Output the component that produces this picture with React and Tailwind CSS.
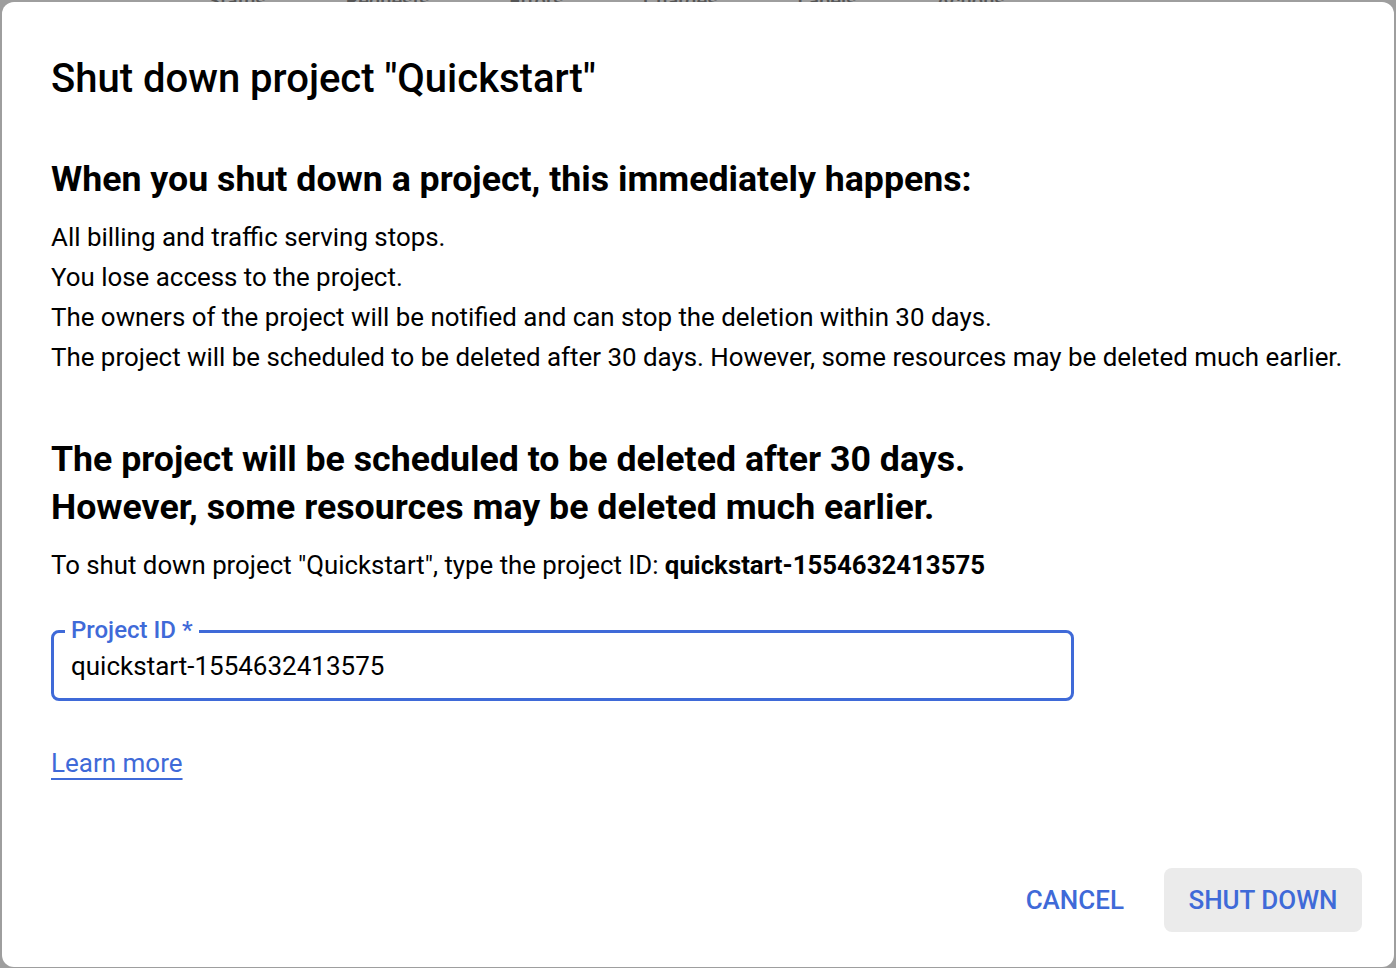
export default function App() {
  const font = { fontFamily: 'Roboto, "Liberation Sans", sans-serif' };
  return (
    <div className="relative w-[1396px] h-[968px] overflow-hidden bg-[#9e9e9e]" style={font}>
      <div className="absolute left-0 top-[-14px] flex gap-[80px] pl-[208px] text-[20px] font-medium text-[#555]">
        <span>Status</span><span>Requests</span><span>Errors</span><span>Charges</span><span>Labels</span><span>Actions</span>
      </div>
      <div className="absolute left-[2px] top-[2px] w-[1392px] h-[965px] bg-white rounded-[12px] flex flex-col pl-[49px] pr-[32px]">
        <h1 className="mt-[53px] text-[40px] leading-[48px] font-medium text-black">Shut down project "Quickstart"</h1>
        <h2 className="mt-[52px] text-[35.7px] leading-[48px] font-bold text-black">When you shut down a project, this immediately happens:</h2>
        <div className="mt-[14px] text-[25.9px] leading-[40px] text-black">
          <p>All billing and traffic serving stops.</p>
          <p>You lose access to the project.</p>
          <p>The owners of the project will be notified and can stop the deletion within 30 days.</p>
          <p>The project will be scheduled to be deleted after 30 days. However, some resources may be deleted much earlier.</p>
        </div>
        <h2 className="mt-[58px] text-[35.7px] leading-[48px] font-bold text-black">The project will be scheduled to be deleted after 30 days.<br />However, some resources may be deleted much earlier.</h2>
        <p className="mt-[16px] text-[25.8px] leading-[36px] text-black">To shut down project "Quickstart", type the project ID: <span className="font-bold">quickstart-1554632413575</span></p>
        <div className="relative mt-[47px] w-[1023px] h-[71px] border-[3px] border-[#3f6ad8] rounded-[8px] flex items-center pl-[17px]">
          <span className="absolute left-[11px] top-[-19px] bg-white px-[6px] text-[24px] leading-[32px] font-medium text-[#3f6ad8]">Project ID *</span>
          <span className="text-[26px] text-black pt-[1px]">quickstart-1554632413575</span>
        </div>
        <div className="mt-[44px]">
          <a className="text-[26px] leading-[36px] text-[#3f6ad8] underline underline-offset-[6px] decoration-[2px]">Learn more</a>
        </div>
        <div className="mt-auto mb-[35px] flex justify-end items-center gap-[20px]">
          <button className="h-[64px] px-[20px] text-[26px] font-medium text-[#3f6ad8] rounded-[8px]">CANCEL</button>
          <button className="h-[64px] w-[198px] text-[26px] font-medium text-[#3f6ad8] bg-[#ebebeb] rounded-[8px]">SHUT DOWN</button>
        </div>
      </div>
    </div>
  );
}
